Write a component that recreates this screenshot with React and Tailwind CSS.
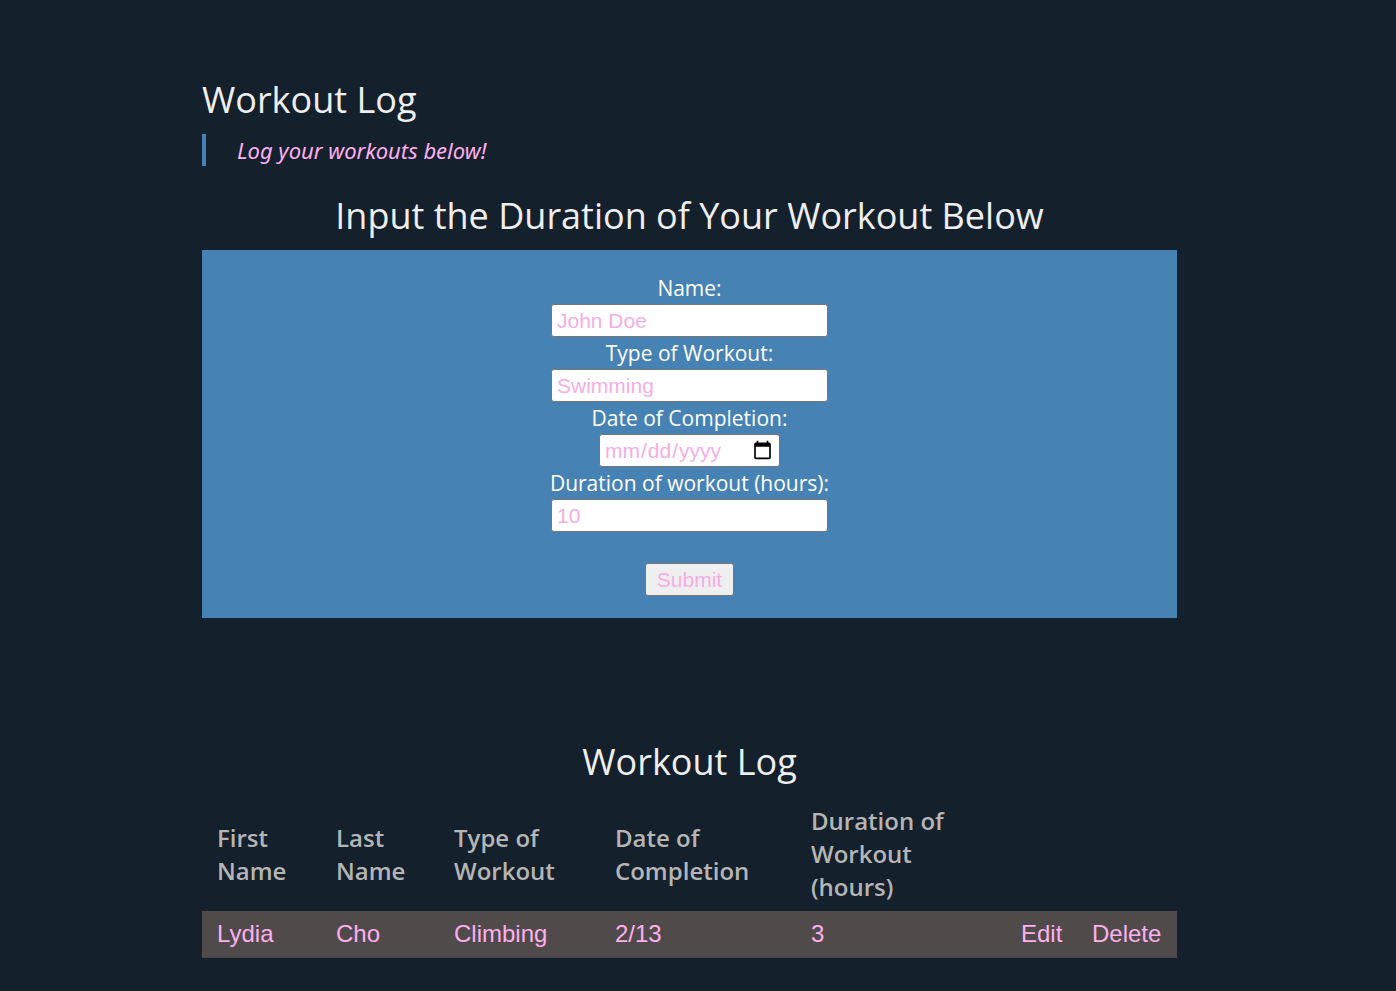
const inputBase =
  "h-[33px] rounded-[3px] border border-[#767676] bg-white font-['Liberation_Sans',sans-serif] text-[21px] leading-6 text-[#f4aee3] placeholder:text-[#f4aee3]";

const entries = [
  { id: 1, first: "Lydia", last: "Cho", type: "Climbing", date: "2/13", hours: "3" },
];

function Field({ id, label, placeholder }) {
  return (
    <>
      <label htmlFor={id} className="leading-8">{label}</label>
      <input id={id} type="text" placeholder={placeholder} className={`${inputBase} w-[277px] px-[5px]`} />
    </>
  );
}

export default function App() {
  return (
    <div className="min-h-screen bg-[#15202d] pt-[76px] pr-[17px] pb-[34px] font-['Open_Sans',sans-serif] text-[21px] text-white">
      <div className="mx-auto max-w-[975px]">
        <header>
          <h1 className="text-4xl leading-[48px] text-[#eeeeee]">Workout Log</h1>
          <p className="mt-[10px] border-l-4 border-[#4682b4] pl-[31px] font-['Noto_Sans',sans-serif] text-[22px] leading-8 text-[#fcb0ee] italic">
            Log your workouts below!
          </p>
        </header>

        <main>
          <h2 className="mt-[26px] text-center text-4xl leading-[48px] text-[#eeeeee]">
            Input the Duration of Your Workout Below
          </h2>
          <form className="mt-[10px] flex flex-col items-center bg-[#4682b4] py-[22px]">
            <Field id="name" label="Name:" placeholder="John Doe" />
            <Field id="type" label="Type of Workout:" placeholder="Swimming" />
            <label htmlFor="date" className="leading-8">Date of Completion:</label>
            <input id="date" type="date" className={`${inputBase} w-[181px] px-1`} />
            <Field id="duration" label="Duration of workout (hours):" placeholder="10" />
            <button
              type="button"
              className="mt-[31px] h-[33px] rounded-[3px] border border-[#767676] bg-[#efefef] px-[11px] font-['Liberation_Sans',sans-serif] leading-6 text-[#f4aee3]"
            >
              Submit
            </button>
          </form>

          <h2 className="mt-[120px] text-center text-4xl leading-[48px] text-[#eeeeee]">Workout Log</h2>
          <table className="mt-[10px] w-full table-fixed border-collapse text-left text-2xl">
            <colgroup>
              <col className="w-[119px]" />
              <col className="w-[118px]" />
              <col className="w-[161px]" />
              <col className="w-[196px]" />
              <col />
              <col className="w-[71px]" />
              <col className="w-[100px]" />
            </colgroup>
            <thead className="leading-[33px] text-[#b4b5b4]">
              <tr>
                <th className="px-[15px] py-2 font-semibold">First Name</th>
                <th className="px-[15px] py-2 font-semibold">Last Name</th>
                <th className="px-[15px] py-2 font-semibold">Type of Workout</th>
                <th className="px-[15px] py-2 font-semibold">Date of Completion</th>
                <th className="px-[15px] py-2 font-semibold">Duration of<br />Workout<br />(hours)</th>
                <td />
                <td />
              </tr>
            </thead>
            <tbody className="bg-[#504a4b] font-['Liberation_Sans',sans-serif] leading-[30px] text-[#fcb0ee]">
              {entries.map((entry) => (
                <tr key={entry.id} className="h-[46px] border-b border-[#444546]">
                  <td className="px-[15px]">{entry.first}</td>
                  <td className="px-[15px]">{entry.last}</td>
                  <td className="px-[15px]">{entry.type}</td>
                  <td className="px-[15px]">{entry.date}</td>
                  <td className="px-[15px]">{entry.hours}</td>
                  <td className="px-[15px]"><button type="button">Edit</button></td>
                  <td className="px-[15px]"><button type="button">Delete</button></td>
                </tr>
              ))}
            </tbody>
          </table>
        </main>
      </div>
    </div>
  );
}
